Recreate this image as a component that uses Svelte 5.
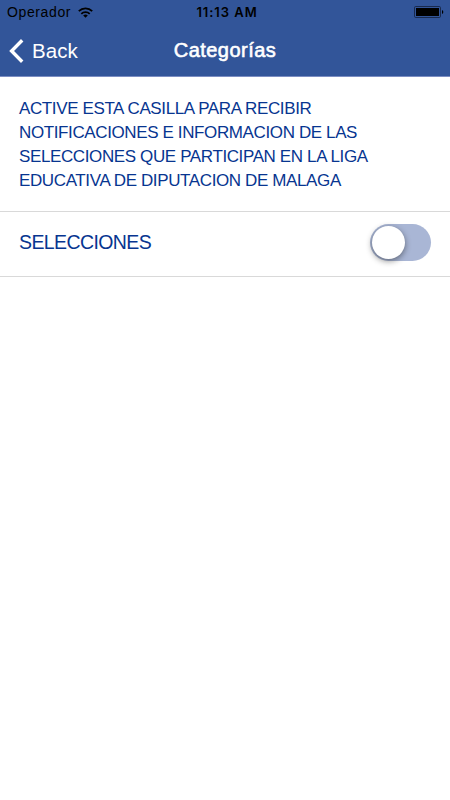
<script>
    let operator = 'Operador';
    let time = '11:13 AM';
    let title = 'Categorías';

    let description = [
        'ACTIVE ESTA CASILLA PARA RECIBIR',
        'NOTIFICACIONES E INFORMACION DE LAS',
        'SELECCIONES QUE PARTICIPAN EN LA LIGA',
        'EDUCATIVA DE DIPUTACION DE MALAGA'
    ];

    let categories = [{ name: 'SELECCIONES', active: false }];
</script>

<div class="screen">
    <header>
        <div class="status-bar">
            <div class="carrier">
                <span>{operator}</span>
                <svg class="wifi" width="15" height="11" viewBox="0 0 15 11" fill="none" stroke="#000" stroke-width="1.8">
                    <path d="M0.8 4.1 C4.5 0.4 10.5 0.4 14.2 4.1" />
                    <path d="M3.3 6.8 C5.6 4.5 9.4 4.5 11.7 6.8" />
                    <path d="M5.2 8.4 Q7.5 6.6 9.8 8.4 L7.5 10.8 Z" fill="#000" stroke="none" />
                </svg>
            </div>
            <span class="time">{time}</span>
            <svg class="battery" width="30" height="12" viewBox="0 0 30 12">
                <rect x="0.5" y="0.5" width="26" height="11" rx="1.2" fill="none" stroke="#192a4e" />
                <rect x="2" y="2" width="23" height="8" fill="#000" />
                <path d="M28 4 Q29.3 4.4 29.3 6 Q29.3 7.6 28 8 Z" fill="#000" />
            </svg>
        </div>
        <div class="nav-bar">
            <button class="back">
                <svg width="15" height="24" viewBox="0 0 15 24" fill="none" stroke="#fff" stroke-width="3.4">
                    <path d="M13.2 1.3 L2.6 12 L13.2 22.7" />
                </svg>
                <span>Back</span>
            </button>
            <h1>{title}</h1>
        </div>
    </header>

    <p class="description">
        {#each description as line}
            <span>{line}</span>
        {/each}
    </p>

    {#each categories as category}
        <label class="category">
            <span>{category.name}</span>
            <input type="checkbox" bind:checked={category.active} />
            <i class="toggle"></i>
        </label>
    {/each}
</div>

<style>
    :global(body) {
        margin: 0;
        background: #fff;
    }

    .screen {
        min-height: 800px;
        font-family: 'Liberation Sans', Arial, sans-serif;
        color: #073590;
        background: #fff;
    }

    header {
        box-sizing: border-box;
        height: 77px;
        background: #325599;
        border-bottom: 1px solid #7b8dc2;
    }

    .status-bar {
        display: grid;
        grid-template-columns: 1fr auto 1fr;
        align-items: center;
        height: 24px;
        padding: 0 6px 0 7px;
        font-size: 14px;
        color: #000;
    }

    .carrier {
        display: flex;
        align-items: center;
        gap: 7px;
        letter-spacing: 0.62px;
    }

    .time {
        padding-left: 3px;
        font-family: Inter, sans-serif;
        font-size: 13px;
        font-weight: 600;
        letter-spacing: 0.95px;
    }

    .battery {
        justify-self: end;
    }

    .nav-bar {
        box-sizing: border-box;
        display: grid;
        grid-template-columns: 1fr auto 1fr;
        align-items: center;
        height: 52px;
        padding: 1px 9px 0;
        color: #fff;
    }

    .back {
        display: flex;
        align-items: center;
        gap: 8px;
        padding: 0;
        border: 0;
        background: none;
        font: 20.5px 'Liberation Sans', Arial, sans-serif;
        letter-spacing: 0.1px;
        color: #fff;
    }

    h1 {
        margin: 0;
        font-size: 20px;
        font-weight: 400;
        letter-spacing: 0.45px;
        -webkit-text-stroke: 0.6px #fff;
    }

    .description {
        margin: 0;
        padding: 20px 19px 18px;
        font-size: 17px;
        line-height: 24px;
        letter-spacing: -0.38px;
        border-bottom: 1px solid #d9d9d9;
    }

    .description span {
        display: block;
        white-space: nowrap;
    }

    .category {
        box-sizing: border-box;
        display: flex;
        align-items: center;
        justify-content: space-between;
        height: 65px;
        padding: 0 19px 3px;
        font-size: 19.5px;
        letter-spacing: -0.6px;
        border-bottom: 1px solid #d9d9d9;
    }

    .category input {
        display: none;
    }

    .toggle {
        box-sizing: border-box;
        width: 61px;
        height: 37px;
        padding: 2px;
        border-radius: 19px;
        background: #a9b6d5;
    }

    .toggle::before {
        content: '';
        display: block;
        width: 33px;
        height: 33px;
        border-radius: 50%;
        background: #fff;
        box-shadow: 0 2px 6px rgba(0, 0, 0, 0.45);
        transition: transform 0.3s;
    }

    input:checked + .toggle {
        background: #325599;
    }

    input:checked + .toggle::before {
        transform: translateX(24px);
    }
</style>
